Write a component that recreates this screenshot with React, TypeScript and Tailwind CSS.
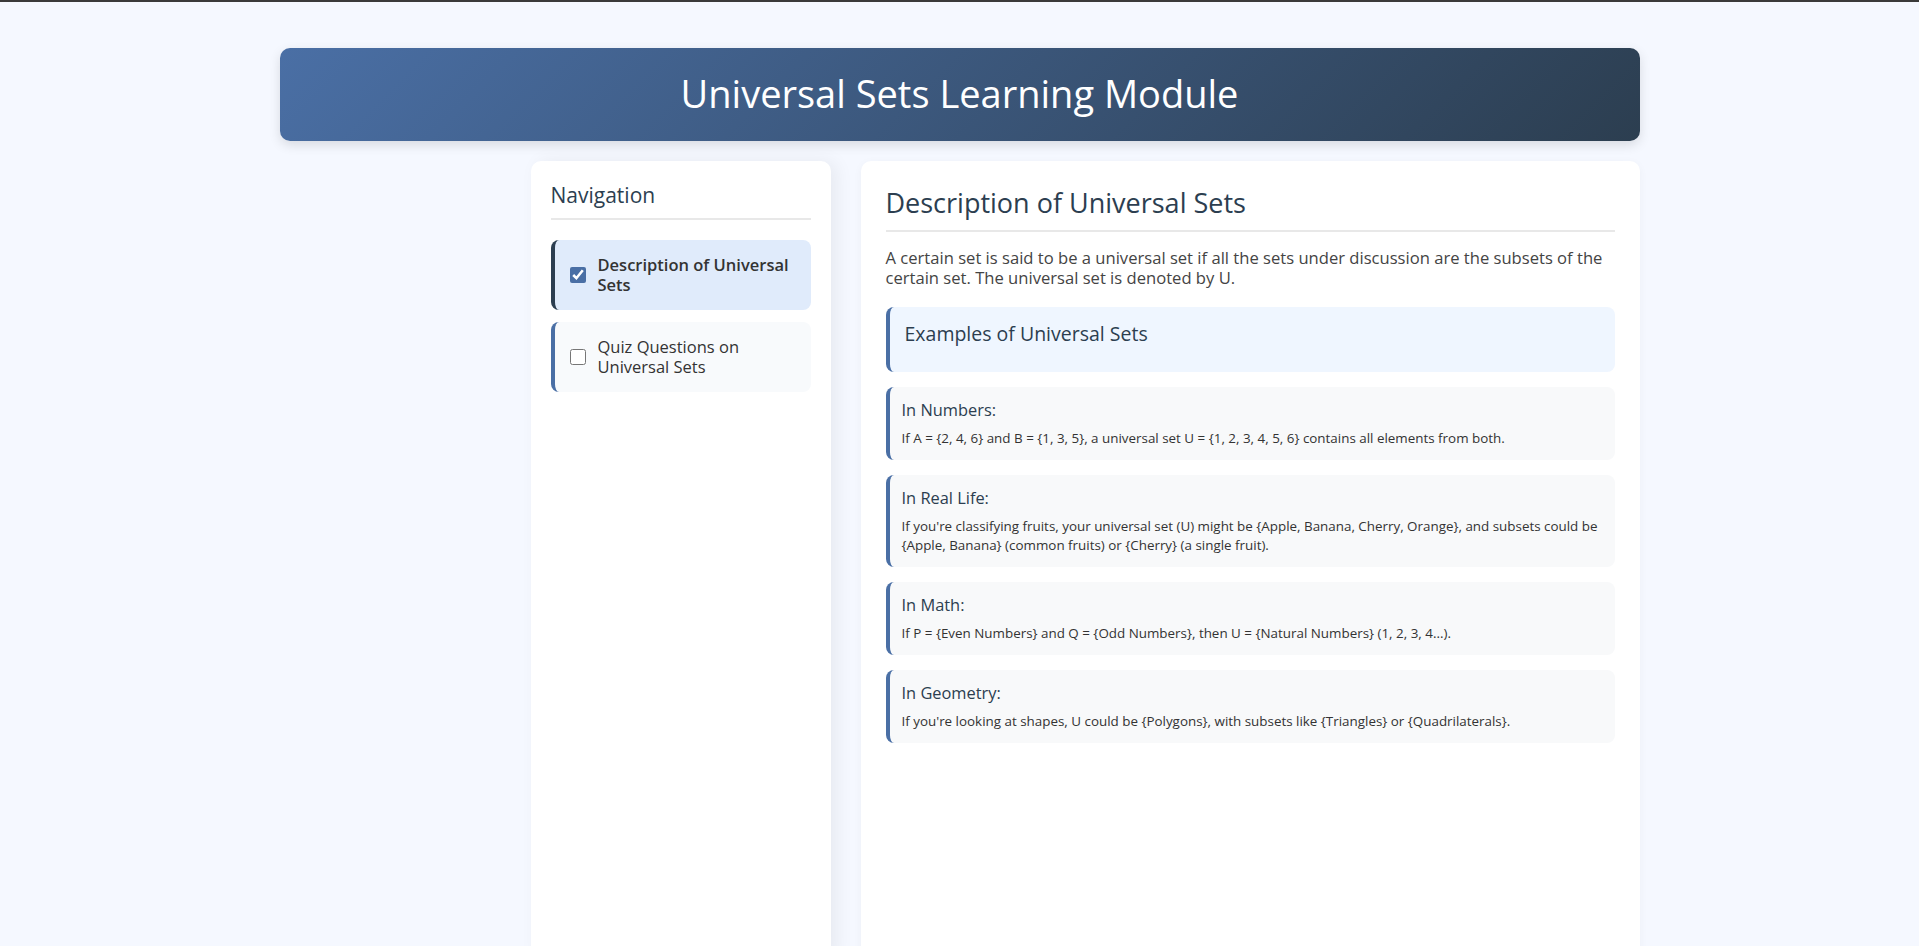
import { useState } from "react";

const examples = [
	{
		title: "In Numbers:",
		text: "If A = {2, 4, 6} and B = {1, 3, 5}, a universal set U = {1, 2, 3, 4, 5, 6} contains all elements from both.",
	},
	{
		title: "In Real Life:",
		text: "If you're classifying fruits, your universal set (U) might be {Apple, Banana, Cherry, Orange}, and subsets could be {Apple, Banana} (common fruits) or {Cherry} (a single fruit).",
	},
	{
		title: "In Math:",
		text: "If P = {Even Numbers} and Q = {Odd Numbers}, then U = {Natural Numbers} (1, 2, 3, 4...).",
	},
	{
		title: "In Geometry:",
		text: "If you're looking at shapes, U could be {Polygons}, with subsets like {Triangles} or {Quadrilaterals}.",
	},
];

const navItems = [
	{ id: "description", label: "Description of Universal Sets" },
	{ id: "quiz", label: "Quiz Questions on Universal Sets" },
];

export default function App() {
	const [active, setActive] = useState("description");

	return (
		<div className="min-h-screen border-t-2 border-[#3a3a3a] bg-[#f5f8ff] font-['Open_Sans',sans-serif] text-[#333]">
			<div className="mx-auto w-[1360px] pt-[46px]">
				<header className="flex h-[93px] items-center justify-center rounded-[10px] bg-[linear-gradient(135deg,#4a6fa5,#2c3e50)] shadow-[0_4px_12px_rgba(0,0,0,0.12)]">
					<h1 className="-mt-[2px] text-[38px] font-normal text-white">
						Universal Sets Learning Module
					</h1>
				</header>

				<div className="mt-5 flex justify-end gap-[30px]">
					<aside className="min-h-[800px] w-[300px] rounded-[10px] bg-white p-5 shadow-[6px_0_18px_rgba(0,0,0,0.06)]">
						<h3 className="border-b-2 border-[#e8e8e8] pb-[10px] pt-px text-[21px] leading-[26px] text-[#2c3e50]">
							Navigation
						</h3>
						<ul className="mt-5 flex flex-col gap-3">
							{navItems.map((item) => {
								const on = active === item.id;
								return (
									<li
										key={item.id}
										onClick={() => setActive(item.id)}
										className={
											on
												? "flex h-[70px] cursor-pointer items-center gap-3 rounded-lg border-l-4 border-[#2c3e50] bg-[#e0ebfb] px-[15px]"
												: "flex h-[70px] cursor-pointer items-center gap-3 rounded-lg border-l-4 border-[#4a6fa5] bg-[#f8fafc] px-[15px]"
										}
									>
										<input
											type="checkbox"
											checked={on}
											readOnly
											className="h-4 w-4 shrink-0 accent-[#4a6fa5]"
										/>
										<span
											className={
												on
													? "text-[16.5px] font-semibold leading-5 text-[#333]"
													: "text-[16.5px] leading-5 text-[#333]"
											}
										>
											{item.label}
										</span>
									</li>
								);
							})}
						</ul>
					</aside>

					<main className="min-h-[800px] w-[779px] rounded-[10px] bg-white p-[25px] shadow-[0_2px_10px_rgba(0,0,0,0.04)]">
						<h2 className="border-b-2 border-[#e8e8e8] pb-[10px] text-[27px] leading-[34px] text-[#2c3e50]">
							Description of Universal Sets
						</h2>
						<p className="mt-4 text-[16.6px] leading-5 text-[#444]">
							A certain set is said to be a universal set if all the sets under
							discussion are the subsets of the certain set. The universal set is
							denoted by U.
						</p>

						<div className="mt-[19px] h-[65px] rounded-lg border-l-4 border-[#4a6fa5] bg-[#eff6ff] px-[15px] pt-[15px]">
							<h3 className="text-[19.5px] leading-6 text-[#2c3e50]">
								Examples of Universal Sets
							</h3>
						</div>

						<div className="mt-[15px] flex flex-col gap-[15px]">
							{examples.map((ex) => (
								<div
									key={ex.title}
									className="rounded-lg border-l-4 border-[#4a6fa5] bg-[#f8f9fa] px-3 py-3"
								>
									<h4 className="text-[16.4px] leading-[22px] text-[#2c3e50]">
										{ex.title}
									</h4>
									<p className="mt-2 text-[13.4px] leading-[19px] text-[#333]">
										{ex.text}
									</p>
								</div>
							))}
						</div>
					</main>
				</div>
			</div>
		</div>
	);
}
